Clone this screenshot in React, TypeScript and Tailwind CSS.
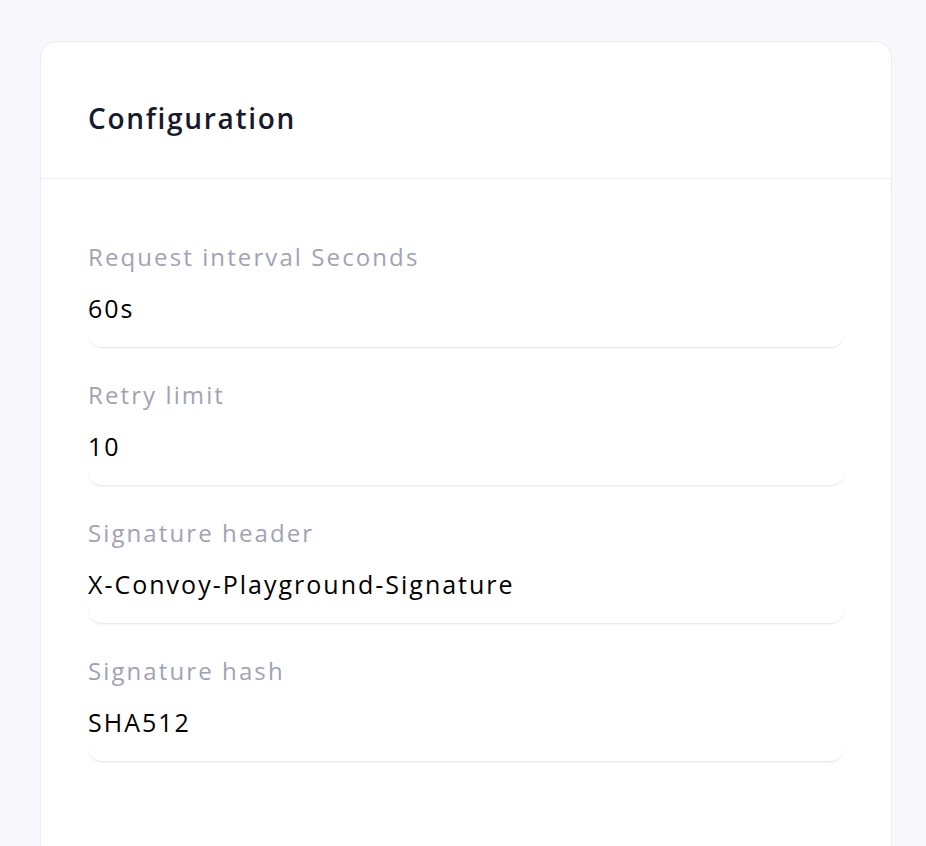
import React from 'react';

const fields = [
  { label: 'Request interval Seconds', value: '60s' },
  { label: 'Retry limit', value: '10' },
  { label: 'Signature header', value: 'X-Convoy-Playground-Signature' },
  { label: 'Signature hash', value: 'SHA512' },
];

export default function App() {
  return (
    <div className="min-h-[846px] w-full bg-[#f8f8fc] pt-[41px] px-[40px] font-['Open_Sans',sans-serif] overflow-hidden">
      <section className="w-[852px] h-[840px] rounded-[16px] border border-[#ececf4] bg-white">
        {/* header */}
        <div className="h-[137px] flex items-center pt-[16px] px-[47px] border-b border-[#ececf4]">
          <h2 className="text-[28px] font-semibold text-[#161a2e] tracking-[1.7px]">Configuration</h2>
        </div>

        {/* fields */}
        <div className="px-[47px] pt-[62px] flex flex-col gap-[31px]">
          {fields.map((f) => (
            <div key={f.label} className="flex flex-col">
              <label className="text-[24px] leading-[32px] text-[#a0a3b6] tracking-[2.1px]">{f.label}</label>
              <div className="mt-[8px] h-[67px] pt-[11px] rounded-[14px] bg-white border-b border-[#e9e9f1] shadow-[0_1px_1px_rgba(30,30,70,0.04)]">
                <span className="block text-[25px] leading-[32px] text-black tracking-[2px]">{f.value}</span>
              </div>
            </div>
          ))}
        </div>
      </section>
    </div>
  );
}
